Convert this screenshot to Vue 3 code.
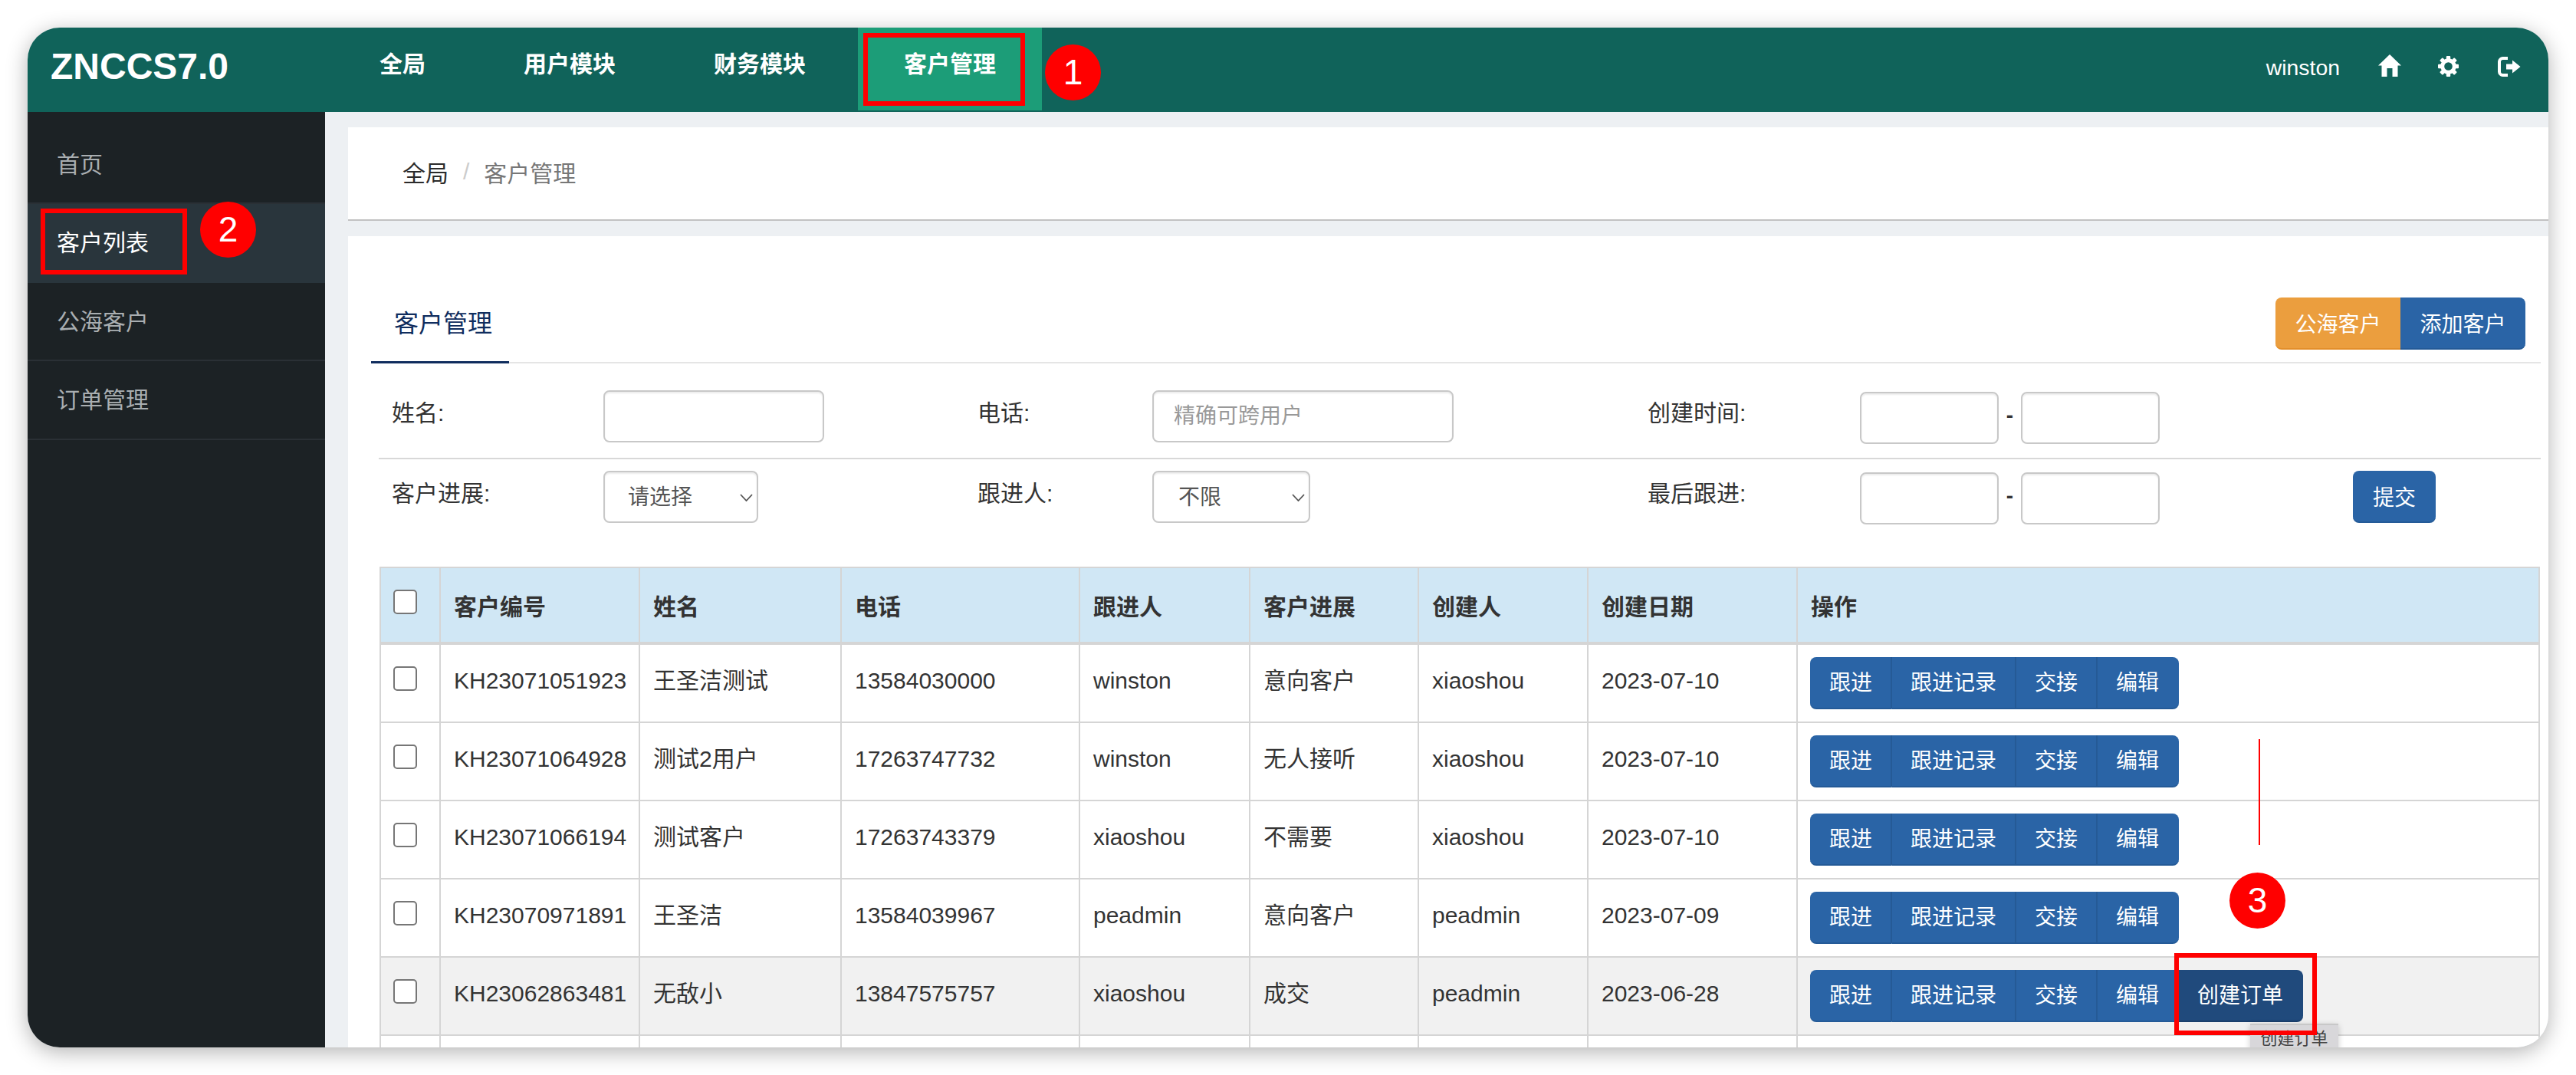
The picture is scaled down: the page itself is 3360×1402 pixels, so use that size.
<script setup>
  const navItems = ['全局', '用户模块', '财务模块', '客户管理']
  const sideItems = ['首页', '客户列表', '公海客户', '订单管理']
  const columns = ['客户编号', '姓名', '电话', '跟进人', '客户进展', '创建人', '创建日期', '操作']
  const actions = ['跟进', '跟进记录', '交接', '编辑']
  const gearTeeth = [0, 45, 90, 135, 180, 225, 270, 315]

  const customers = [
    { no: 'KH23071051923', name: '王圣洁测试', phone: '13584030000', owner: 'winston', stage: '意向客户', creator: 'xiaoshou', date: '2023-07-10' },
    { no: 'KH23071064928', name: '测试2用户', phone: '17263747732', owner: 'winston', stage: '无人接听', creator: 'xiaoshou', date: '2023-07-10' },
    { no: 'KH23071066194', name: '测试客户', phone: '17263743379', owner: 'xiaoshou', stage: '不需要', creator: 'xiaoshou', date: '2023-07-10' },
    { no: 'KH23070971891', name: '王圣洁', phone: '13584039967', owner: 'peadmin', stage: '意向客户', creator: 'peadmin', date: '2023-07-09' },
    { no: 'KH23062863481', name: '无敌小', phone: '13847575757', owner: 'xiaoshou', stage: '成交', creator: 'peadmin', date: '2023-06-28', won: true }
  ]
</script>

<template>
  <div class="page">
    <div class="window">
      <header class="topbar">
        <div class="topbar__logo">ZNCCS7.0</div>
        <nav class="topbar__nav">
          <a v-for="(item, i) in navItems" :key="item" class="topbar__link" :class="{ 'topbar__link--active': i === 3 }">{{ item }}</a>
        </nav>
        <div class="topbar__user">
          <span class="topbar__name">winston</span>
          <svg class="icon icon--home" viewBox="0 0 30 29">
            <path d="M15 0 L30 14.5 H25.5 V29 H18.5 V18 H11.5 V29 H4.5 V14.5 H0 Z" fill="#fff" />
          </svg>
          <svg class="icon icon--gear" viewBox="0 0 27 27">
            <circle cx="13.5" cy="13.5" r="7.8" fill="none" stroke="#fff" stroke-width="5" />
            <rect v-for="a in gearTeeth" :key="a" x="10.8" y="0" width="5.4" height="6" rx="1" fill="#fff" :transform="`rotate(${a} 13.5 13.5)`" />
          </svg>
          <svg class="icon icon--out" viewBox="0 0 30 26">
            <path d="M13 2 H6.5 A4.5 4.5 0 0 0 2 6.5 V19.5 A4.5 4.5 0 0 0 6.5 24 H13" fill="none" stroke="#fff" stroke-width="4" />
            <path d="M11 9.5 H19 V4.5 L29.5 13 L19 21.5 V16.5 H11 Z" fill="#fff" />
          </svg>
        </div>
      </header>

      <div class="body">
        <aside class="sidebar">
          <a v-for="(item, i) in sideItems" :key="item" class="sidebar__item" :class="{ 'sidebar__item--active': i === 1 }">{{ item }}</a>
        </aside>

        <main class="content">
          <div class="crumbs">
            <span class="crumbs__home">全局</span>
            <span class="crumbs__sep">/</span>
            <span class="crumbs__current">客户管理</span>
          </div>

          <section class="card">
            <div class="tabs">
              <div class="tabs__item">客户管理</div>
              <div class="tabs__actions">
                <button class="btn btn--orange">公海客户</button>
                <button class="btn btn--blue">添加客户</button>
              </div>
            </div>

            <div class="filter filter--first">
              <label class="filter__label">姓名:</label>
              <div><input class="field field--name" /></div>
              <label class="filter__label">电话:</label>
              <div><input class="field field--phone" placeholder="精确可跨用户" /></div>
              <label class="filter__label">创建时间:</label>
              <div class="filter__dates">
                <input class="field field--date" />
                <span class="filter__dash">-</span>
                <input class="field field--date" />
              </div>
              <div></div>
            </div>

            <div class="filter filter--second">
              <label class="filter__label">客户进展:</label>
              <div class="select">
                <select class="field field--stage"><option>请选择</option></select>
                <svg class="select__caret" viewBox="0 0 17 10"><path d="M1 1 L8.5 9 L16 1" fill="none" stroke="#555" stroke-width="1.8" /></svg>
              </div>
              <label class="filter__label">跟进人:</label>
              <div class="select">
                <select class="field field--owner"><option>不限</option></select>
                <svg class="select__caret" viewBox="0 0 17 10"><path d="M1 1 L8.5 9 L16 1" fill="none" stroke="#555" stroke-width="1.8" /></svg>
              </div>
              <label class="filter__label">最后跟进:</label>
              <div class="filter__dates">
                <input class="field field--date" />
                <span class="filter__dash">-</span>
                <input class="field field--date" />
              </div>
              <div><button class="btn btn--blue btn--submit">提交</button></div>
            </div>

            <table class="table">
              <colgroup>
                <col style="width: 78px" />
                <col style="width: 260px" />
                <col style="width: 263px" />
                <col style="width: 311px" />
                <col style="width: 222px" />
                <col style="width: 220px" />
                <col style="width: 221px" />
                <col style="width: 273px" />
                <col style="width: 968px" />
              </colgroup>
              <thead>
                <tr>
                  <th class="table__check"><input class="check" type="checkbox" /></th>
                  <th v-for="col in columns" :key="col">{{ col }}</th>
                </tr>
              </thead>
              <tbody>
                <tr v-for="c in customers" :key="c.no" :class="{ 'table__row--hover': c.won }">
                  <td class="table__check"><input class="check" type="checkbox" /></td>
                  <td>{{ c.no }}</td>
                  <td>{{ c.name }}</td>
                  <td>{{ c.phone }}</td>
                  <td>{{ c.owner }}</td>
                  <td>{{ c.stage }}</td>
                  <td>{{ c.creator }}</td>
                  <td>{{ c.date }}</td>
                  <td class="table__actions">
                    <div class="group">
                      <button v-for="a in actions" :key="a" class="group__btn">{{ a }}</button>
                      <button v-if="c.won" class="group__btn group__btn--hover">创建订单</button>
                    </div>
                  </td>
                </tr>
                <tr>
                  <td class="table__check"></td>
                  <td></td><td></td><td></td><td></td><td></td><td></td><td></td><td></td>
                </tr>
              </tbody>
            </table>
          </section>
        </main>
      </div>

      <!-- annotations drawn over the screenshot -->
      <div class="tip">创建订单</div>
      <div class="mark mark--nav"></div>
      <div class="mark mark--side"></div>
      <div class="mark mark--order"></div>
      <div class="badge badge--1">1</div>
      <div class="badge badge--2">2</div>
      <div class="badge badge--3">3</div>
      <div class="red-line"></div>
    </div>
  </div>
</template>

<style>
  html,
  body {
    margin: 0;
    background: #fff;
    overflow: hidden;
  }
</style>

<style scoped>
  .page {
    width: 3360px;
    height: 1402px;
    padding: 36px;
    box-sizing: border-box;
    font-family: 'Liberation Sans', 'Noto Sans CJK SC', sans-serif;
    font-size: 30px;
    color: #333;
  }
  .window {
    position: relative;
    display: flex;
    flex-direction: column;
    width: 3288px;
    height: 1330px;
    border-radius: 42px;
    overflow: hidden;
    background: #edf0f3;
    box-shadow: 0 6px 28px rgba(0, 0, 0, 0.3);
  }

  .topbar {
    display: flex;
    flex: none;
    height: 110px;
    background: #10635a;
    color: #fff;
  }
  .topbar__logo {
    width: 369px;
    padding-left: 30px;
    font-size: 48px;
    font-weight: 700;
    line-height: 102px;
  }
  .topbar__nav {
    display: flex;
    gap: 8px;
  }
  .topbar__link {
    height: 108px;
    padding: 0 60px;
    font-weight: 700;
    line-height: 96px;
  }
  .topbar__link--active {
    background: #1c9d78;
  }
  .topbar__user {
    display: flex;
    align-items: flex-start;
    margin-left: auto;
    padding-right: 36px;
  }
  .topbar__name {
    margin-top: 32px;
    font-size: 28.4px;
    line-height: 40px;
  }
  .icon {
    display: block;
  }
  .icon--home {
    width: 30px;
    height: 29px;
    margin: 35px 0 0 50px;
  }
  .icon--gear {
    width: 27px;
    height: 27px;
    margin: 37px 0 0 48px;
  }
  .icon--out {
    width: 30px;
    height: 26px;
    margin: 38px 0 0 51px;
  }

  .body {
    display: flex;
    flex: 1;
    min-height: 0;
  }
  .sidebar {
    flex: none;
    width: 388px;
    padding-top: 18px;
    box-sizing: border-box;
    background: #1c2225;
  }
  .sidebar__item {
    display: block;
    height: 102.4px;
    padding-left: 38px;
    box-sizing: border-box;
    border-bottom: 2px solid #2a3035;
    color: #a9aeb1;
    line-height: 102px;
  }
  .sidebar__item--active {
    border-bottom-color: #29353c;
    background: #29353c;
    color: #fff;
  }

  .content {
    flex: 1;
    min-width: 0;
    padding: 20px 0 0 30px;
  }
  .crumbs {
    display: flex;
    height: 122px;
    padding-left: 71px;
    padding-bottom: 4px;
    box-sizing: border-box;
    align-items: center;
    border-bottom: 2px solid #c2c2c2;
    background: #fff;
  }
  .crumbs__home {
    color: #2b2b2b;
  }
  .crumbs__sep {
    margin: 0 19px;
    color: #ccc;
    font-size: 30px;
  }
  .crumbs__current {
    color: #777;
  }

  .card {
    height: 1100px;
    margin-top: 20px;
    background: #fff;
  }
  .tabs {
    display: flex;
    justify-content: space-between;
    align-items: flex-end;
    height: 166px;
    box-sizing: border-box;
    margin: 0 10px 0 30px;
    padding-right: 20px;
    border-bottom: 2px solid #e5e5e5;
  }
  .tabs__item {
    width: 180px;
    height: 73px;
    margin-bottom: -2px;
    padding-left: 30px;
    box-sizing: border-box;
    border-bottom: 3px solid #102d5e;
    color: #102d5e;
    font-size: 32px;
    line-height: 42px;
  }
  .tabs__actions {
    display: flex;
    margin-bottom: 16px;
  }

  .btn {
    height: 68px;
    padding: 0 25.5px;
    border: 0;
    border-bottom: 2px solid transparent;
    color: #fff;
    font: inherit;
    font-size: 28px;
  }
  .btn--orange {
    border-bottom-color: #e38f2b;
    border-radius: 8px 0 0 8px;
    background: #eb9e3e;
  }
  .btn--blue {
    border-bottom-color: #245a97;
    border-radius: 0 8px 8px 0;
    background: #2a64a6;
  }
  .btn--submit {
    display: block;
    width: 108px;
    padding: 0;
    border-radius: 8px;
  }

  .filter {
    display: grid;
    grid-template-columns: 276px 488px 228px 646px 277px 643px auto;
    margin: 0 10px 0 40px;
    padding-left: 17px;
    box-sizing: border-box;
  }
  .filter--first {
    height: 125px;
    padding-top: 35px;
    border-bottom: 2px solid #d8d8d8;
  }
  .filter--second {
    height: 83px;
    padding-top: 15px;
  }
  .filter__label {
    margin-top: 10px;
    font-size: 30px;
    line-height: 40px;
  }
  .filter__dates {
    display: flex;
    align-items: center;
    height: 68px;
    margin-top: 2px;
  }
  .filter__dash {
    width: 29px;
    margin-top: -6px;
    font-size: 28px;
    font-weight: 700;
    text-align: center;
  }

  .field {
    display: block;
    height: 68px;
    padding: 0 26px;
    box-sizing: border-box;
    border: 2px solid #c8c8c8;
    border-radius: 8px;
    outline: 0;
    box-shadow: inset 0 2px 2px rgba(0, 0, 0, 0.075);
    background: #fff;
    color: #555;
    font: inherit;
    font-size: 28px;
  }
  .field::placeholder {
    color: #999;
  }
  .field--name {
    width: 288px;
  }
  .field--phone {
    width: 393px;
  }
  .field--date {
    width: 181px;
  }
  .field--stage {
    width: 202px;
    padding-left: 30px;
    appearance: none;
  }
  .field--owner {
    width: 206px;
    padding-left: 32px;
    appearance: none;
  }
  .select {
    position: relative;
    width: max-content;
    height: 68px;
  }
  .select__caret {
    position: absolute;
    top: 30px;
    right: 7px;
    width: 17px;
    height: 10px;
  }

  .table {
    width: 2818px;
    margin: 57px 0 0 41px;
    border-collapse: separate;
    border-spacing: 0;
    border-top: 2px solid #d5d5d5;
    border-left: 2px solid #d5d5d5;
    table-layout: fixed;
  }
  .table th,
  .table td {
    height: 75px;
    padding: 25px 8px 0 17px;
    box-sizing: content-box;
    border-right: 2px solid #d5d5d5;
    border-bottom: 2px solid #d5d5d5;
    font-weight: 400;
    line-height: 43px;
    text-align: left;
    vertical-align: top;
    white-space: nowrap;
  }
  .table th {
    height: 67px;
    padding-top: 29px;
    border-bottom-width: 4px;
    background: #d0e7f5;
    font-weight: 700;
  }
  .table .table__check {
    height: 72px;
    padding: 28px 0 0 16px;
    line-height: 0;
  }
  .table th.table__check {
    height: 68px;
  }
  .table .table__actions {
    height: 84px;
    padding: 16px 0 0 16px;
  }
  .table__row--hover td {
    background: #f1f1f1;
  }
  .check {
    width: 31px;
    height: 32px;
    margin: 0;
    border: 2px solid #767676;
    border-radius: 5px;
    background: #fff;
    appearance: none;
  }

  .group {
    display: flex;
  }
  .group__btn {
    height: 68px;
    padding: 0 24px;
    border: 0;
    border-right: 2px solid #255a96;
    border-bottom: 2px solid #245a97;
    background: #2a64a6;
    color: #fff;
    font: inherit;
    font-size: 28px;
  }
  .group__btn:first-child {
    padding-left: 25px;
    border-radius: 8px 0 0 8px;
  }
  .group__btn:last-child {
    padding-right: 26px;
    border-right: 0;
    border-radius: 0 8px 8px 0;
  }
  .group__btn--hover {
    border-bottom-color: #1a3f6c;
    background: #204a7c;
  }

  .tip {
    position: absolute;
    top: 1299px;
    left: 2899px;
    width: 115px;
    height: 44px;
    border-top: 2px solid #c8c8c8;
    background: #d8d7da;
    box-shadow: 0 2px 8px rgba(0, 0, 0, 0.2);
    color: #444;
    font-size: 22px;
    line-height: 36px;
    text-align: center;
  }
  .mark {
    position: absolute;
    box-sizing: border-box;
    border: 6px solid #f00;
  }
  .mark--nav {
    top: 7px;
    left: 1090px;
    width: 211px;
    height: 95px;
  }
  .mark--side {
    top: 236px;
    left: 17px;
    width: 191px;
    height: 86px;
  }
  .mark--order {
    top: 1207px;
    left: 2800px;
    width: 186px;
    height: 107px;
  }
  .badge {
    position: absolute;
    width: 73px;
    height: 73px;
    border-radius: 50%;
    background: #f00;
    color: #fff;
    font-size: 46px;
    line-height: 73px;
    text-align: center;
  }
  .badge--1 {
    top: 22px;
    left: 1327px;
  }
  .badge--2 {
    top: 227px;
    left: 225px;
  }
  .badge--3 {
    top: 1102px;
    left: 2872px;
  }
  .red-line {
    position: absolute;
    top: 928px;
    left: 2910px;
    width: 2px;
    height: 138px;
    background: #f00;
  }
</style>
